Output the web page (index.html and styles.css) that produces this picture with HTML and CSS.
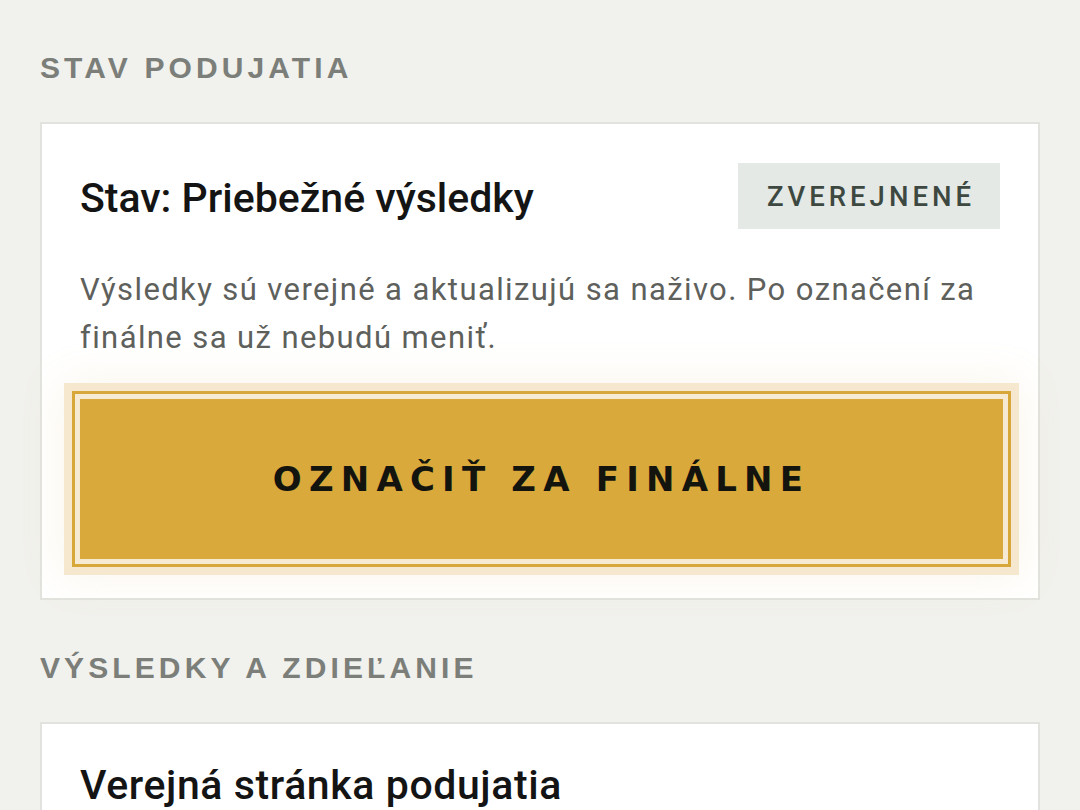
FILE: index.html
```html
<!DOCTYPE html>
<html lang="sk">
<head>
<meta charset="utf-8">
<title>Stav podujatia</title>
<link rel="stylesheet" href="styles.css">
</head>
<body>
<main class="page">
  <section class="group">
    <h2 class="section-label">STAV PODUJATIA</h2>
    <div class="card">
      <div class="card-head">
        <h3 class="card-title">Stav: Priebežné výsledky</h3>
        <span class="badge">ZVEREJNENÉ</span>
      </div>
      <p class="card-text">Výsledky sú verejné a aktualizujú sa naživo. Po označení za finálne sa už nebudú meniť.</p>
      <button class="btn-final" type="button">OZNAČIŤ ZA FINÁLNE</button>
    </div>
  </section>
  <section class="group">
    <h2 class="section-label">VÝSLEDKY A ZDIEĽANIE</h2>
    <div class="card">
      <h3 class="card-title card-title-alt">Verejná stránka podujatia</h3>
    </div>
  </section>
</main>
</body>
</html>
```
FILE: styles.css
```css
html, body {
  margin: 0;
  padding: 0;
  background: #f1f1ed;
}

body {
  font-family: Roboto, "Noto Sans", sans-serif;
  color: #151515;
  overflow: hidden;
  height: 810px;
}

.page {
  padding: 51px 40px 0;
  display: flex;
  flex-direction: column;
  gap: 51px;
}

.section-label {
  margin: 0 0 37px;
  font-family: "Liberation Sans", Arial, sans-serif;
  font-weight: 700;
  font-size: 30px;
  line-height: 34px;
  letter-spacing: 4.1px;
  color: #7b7e79;
}

.card {
  background: #ffffff;
  border: 2px solid #e2e3de;
  padding: 39px 38px 39px 38px;
}

.card-head {
  display: flex;
  align-items: center;
  justify-content: space-between;
  min-height: 66px;
}

.card-title {
  margin: 0;
  font-family: Roboto, sans-serif;
  font-weight: 500;
  font-size: 41px;
  line-height: 48px;
  color: #141414;
  padding-top: 4px;
}

.card-title-alt {
  font-size: 41px;
  line-height: 44px;
  letter-spacing: 0.6px;
  padding-top: 0;
}

.badge {
  display: flex;
  align-items: center;
  height: 66px;
  box-sizing: border-box;
  padding: 0 25px 0 29px;
  background: #e4e9e5;
  color: #3d4841;
  font-family: Roboto, sans-serif;
  font-weight: 500;
  font-size: 27.5px;
  letter-spacing: 4px;
}

.card-text {
  margin: 37px 0 0;
  font-family: Roboto, sans-serif;
  font-weight: 400;
  font-size: 31px;
  line-height: 48px;
  letter-spacing: 1.4px;
  color: #5e605c;
}

.btn-final {
  display: block;
  width: calc(100% + 3px);
  height: 160px;
  margin: 37px 0 0;
  border: 0;
  background: #d9a93b;
  color: #14140f;
  font-family: "DejaVu Sans", sans-serif;
  font-weight: 700;
  font-size: 34px;
  letter-spacing: 7.2px;
  padding: 0;
  box-shadow:
    0 0 0 5px #f6ebd2,
    0 0 0 8px #d7a73a,
    0 0 0 16px #f6e8cf,
    0 0 40px 18px rgba(230, 190, 110, 0.14);
  cursor: pointer;
}
```
